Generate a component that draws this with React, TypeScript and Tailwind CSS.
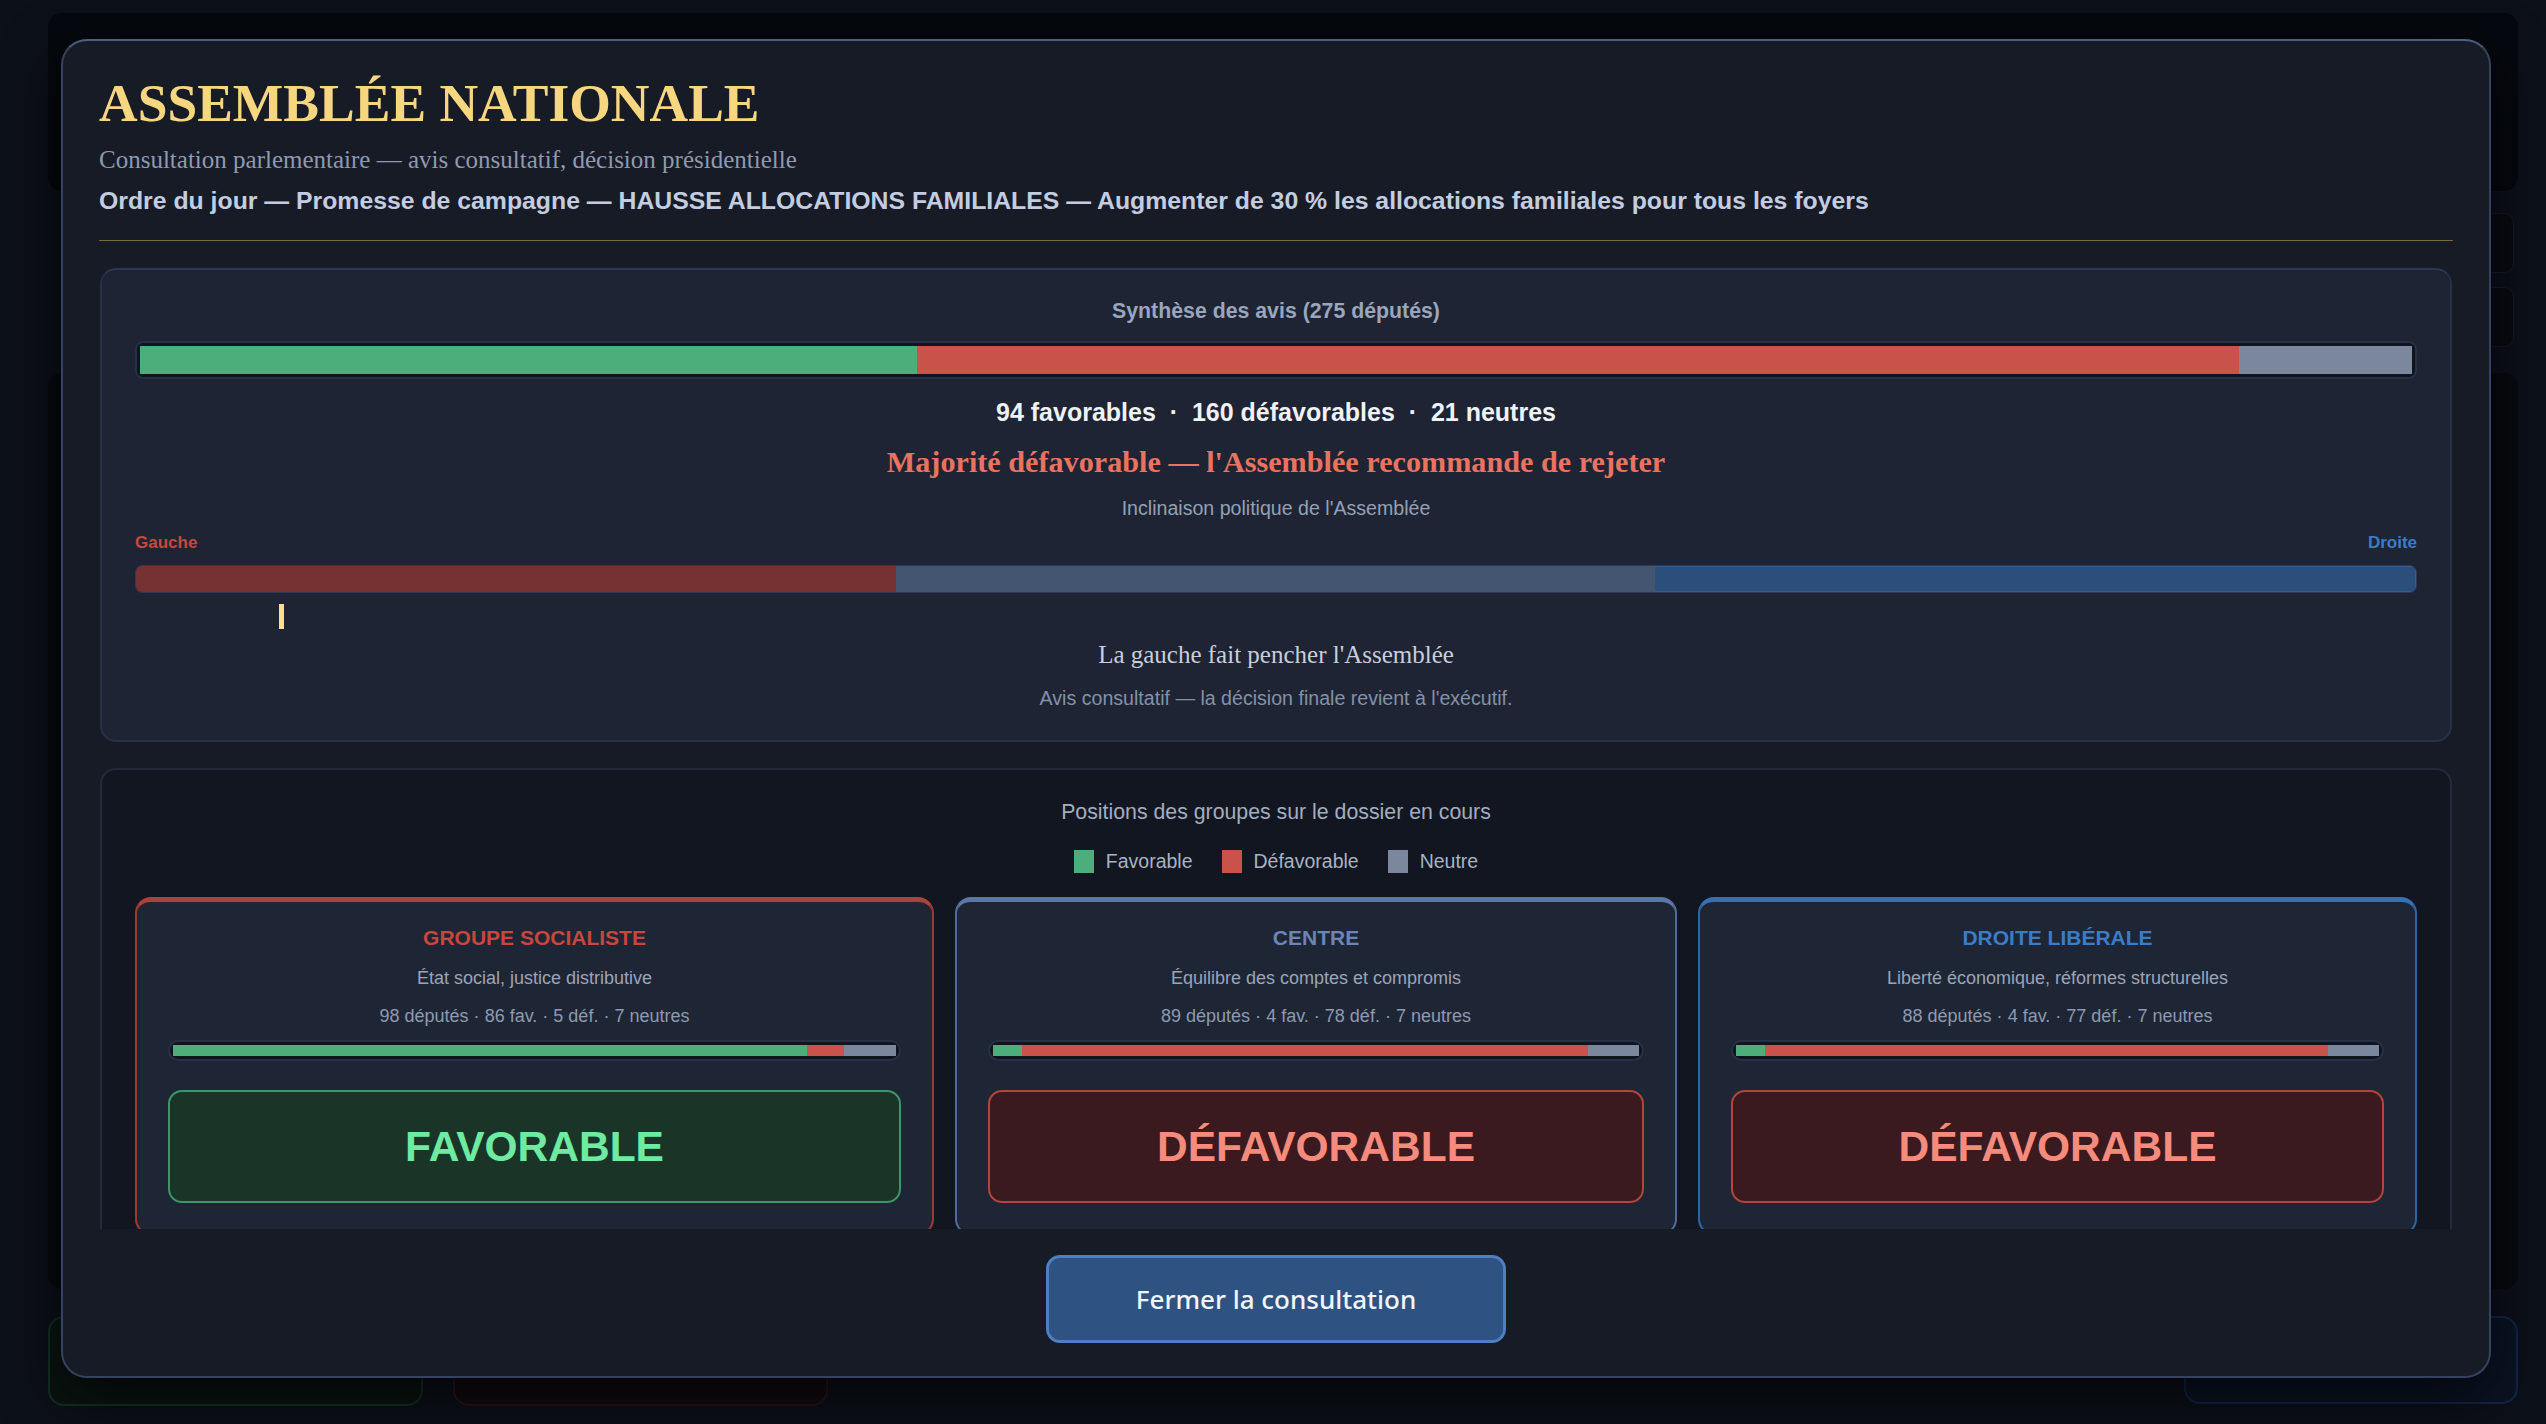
import React from "react";

const sans = { fontFamily: '"Liberation Sans", Arial, sans-serif' };
const serif = { fontFamily: '"Liberation Serif", "Times New Roman", serif' };

interface Group {
  name: string;
  motto: string;
  seats: number;
  fav: number;
  def: number;
  neu: number;
  verdict: "FAVORABLE" | "DÉFAVORABLE";
  cardClass: string;
  titleClass: string;
}

const groups: Group[] = [
  {
    name: "GROUPE SOCIALISTE",
    motto: "État social, justice distributive",
    seats: 98,
    fav: 86,
    def: 5,
    neu: 7,
    verdict: "FAVORABLE",
    cardClass: "border-[#9b3a33] border-t-[#a9443b]",
    titleClass: "text-[#c9463d]",
  },
  {
    name: "CENTRE",
    motto: "Équilibre des comptes et compromis",
    seats: 89,
    fav: 4,
    def: 78,
    neu: 7,
    verdict: "DÉFAVORABLE",
    cardClass: "border-[#4f6d9c] border-t-[#5a77a6]",
    titleClass: "text-[#6a85b6]",
  },
  {
    name: "DROITE LIBÉRALE",
    motto: "Liberté économique, réformes structurelles",
    seats: 88,
    fav: 4,
    def: 77,
    neu: 7,
    verdict: "DÉFAVORABLE",
    cardClass: "border-[#2e66a5] border-t-[#3470b3]",
    titleClass: "text-[#3b7cc6]",
  },
];

const VoteBar = ({ fav, def, neu, thin }: { fav: number; def: number; neu: number; thin?: boolean }) => {
  const total = fav + def + neu;
  return (
    <div className={`border-2 border-[#263046] bg-[#10141f] p-[3px] ${thin ? "rounded-full" : "rounded-[8px]"}`}>
      <div className={`flex w-full ${thin ? "h-[11px]" : "h-[28px]"}`}>
        <div className="bg-[#4caf7b]" style={{ width: `${(fav / total) * 100}%` }} />
        <div className="bg-[#c9524a]" style={{ width: `${(def / total) * 100}%` }} />
        <div className="bg-[#7b879c]" style={{ width: `${(neu / total) * 100}%` }} />
      </div>
    </div>
  );
};

const GroupCard = ({ g }: { g: Group }) => {
  const favorable = g.verdict === "FAVORABLE";
  return (
    <div className={`rounded-[16px] border-2 border-t-[5px] bg-[#1e2535] px-[31px] pt-[22px] pb-[30px] text-center ${g.cardClass}`}>
      <div className={`text-[21px] font-bold leading-[28px] ${g.titleClass}`}>{g.name}</div>
      <div className="mt-[12px] text-[18px] leading-[28px] text-[#9aa5b8]">{g.motto}</div>
      <div className="mt-[10px] text-[18px] leading-[28px] text-[#8e9ab0]">
        {g.seats} députés · {g.fav} fav. · {g.def} déf. · {g.neu} neutres
      </div>
      <div className="mt-[10px]">
        <VoteBar fav={g.fav} def={g.def} neu={g.neu} thin />
      </div>
      <div
        className={`mt-[29px] flex h-[113px] items-center justify-center rounded-[14px] border-2 text-[42.5px] font-bold ${
          favorable ? "border-[#3b9668] bg-[#1a3528] text-[#6eeaa2]" : "border-[#b2463c] bg-[#3a1a1e] text-[#f58b7c]"
        }`}
      >
        {g.verdict}
      </div>
    </div>
  );
};

export default function App() {
  const leaning = 6.3;
  return (
    <div className="relative h-[1424px] w-full overflow-hidden bg-[#0c1019]" style={sans}>
      {/* page derrière la fenêtre */}
      <div className="flex h-full flex-col px-[48px] pt-[13px] pb-[18px]">
        <div className="h-[178px] w-[2470px] rounded-[14px] bg-[#05080e]" />
        <div className="mt-[22px] flex w-[2470px] justify-end gap-[14px] pr-[4px]">
          <div className="h-[60px] w-[120px] rounded-[10px] border border-[#151b27] bg-[#080b12]" />
        </div>
        <div className="mt-[14px] flex w-[2470px] justify-end pr-[4px]">
          <div className="h-[60px] w-[120px] rounded-[10px] border border-[#151b27] bg-[#080b12]" />
        </div>
        <div className="mt-[26px] h-[918px] w-[2470px] rounded-[14px] bg-[#070a10]" />
        <div className="mt-[27px] flex w-[2470px] items-start">
          <div className="h-[90px] w-[375px] rounded-[16px] border-2 border-[#143124] bg-[#0a1410]" />
          <div className="ml-[30px] h-[90px] w-[375px] rounded-[16px] border-2 border-[#2a141a] bg-[#110b10]" />
          <div className="flex-1" />
          <div className="h-[88px] w-[334px] rounded-[16px] border-2 border-[#13264a] bg-[#0b1424]" />
        </div>
      </div>

      {/* fenêtre de consultation */}
      <div className="absolute inset-0 flex items-start pl-[61px] pt-[39px]">
        <div className="flex h-[1339px] w-[2430px] flex-col rounded-[26px] border-2 border-[#34435f] border-t-[#4b6087] bg-[#171b26] shadow-[0_20px_60px_rgba(0,0,0,0.7)]">
          {/* en-tête */}
          <div className="px-[36px] pt-[33px]">
            <h1 className="text-[53.5px] font-bold leading-[58px] text-[#f6d67f]" style={serif}>
              ASSEMBLÉE NATIONALE
            </h1>
            <p className="mt-[11px] text-[25px] leading-[34px] text-[#8e9ab0]" style={serif}>
              Consultation parlementaire — avis consultatif, décision présidentielle
            </p>
            <p className="mt-[7px] text-[24.8px] font-bold leading-[34px] text-[#c3cde0]">
              Ordre du jour — Promesse de campagne — HAUSSE ALLOCATIONS FAMILIALES — Augmenter de 30 % les allocations
              familiales pour tous les foyers
            </p>
            <div className="mt-[22px] h-px bg-[#7a683d]" />
          </div>

          {/* contenu défilant */}
          <div className="flex-1 overflow-hidden px-[37px] pt-[27px]">
            {/* synthèse */}
            <div className="rounded-[16px] border-2 border-[#263047] border-t-[#2c3853] bg-[#1e2433] px-[33px] pt-[26px] pb-[28px] text-center">
              <div className="text-[21.3px] font-bold leading-[30px] text-[#9aa6bd]">Synthèse des avis (275 députés)</div>
              <div className="mt-[15px]">
                <VoteBar fav={94} def={160} neu={21} />
              </div>
              <div className="mt-[15px] text-[25px] font-bold leading-[36px] text-[#eef2f7]">
                94 favorables&nbsp; ·&nbsp; 160 défavorables&nbsp; ·&nbsp; 21 neutres
              </div>
              <div className="mt-[12px] text-[30.2px] font-bold leading-[40px] text-[#e9735f]" style={serif}>
                Majorité défavorable — l'Assemblée recommande de rejeter
              </div>
              <div className="mt-[12px] text-[19.6px] leading-[28px] text-[#94a0b5]">Inclinaison politique de l'Assemblée</div>
              <div className="mt-[9px] flex justify-between text-[17px] font-bold leading-[24px]">
                <span className="text-[#c9473d]">Gauche</span>
                <span className="text-[#3b7dc6]">Droite</span>
              </div>
              <div className="mt-[10px] flex h-[28px] overflow-hidden rounded-[7px] border border-[#2c3a55]">
                <div className="flex-1 bg-[#763233]" />
                <div className="flex-1 bg-[#445572]" />
                <div className="flex-1 border-y border-r border-[#2f5e99] bg-[#2b4e7b]" />
              </div>
              <div className="mt-[11px] h-[25px]">
                <div className="h-[25px] w-[5px] bg-[#f8e08e]" style={{ marginLeft: `${leaning}%` }} />
              </div>
              <div className="mt-[9px] text-[25px] leading-[34px] text-[#c7cfdc]" style={serif}>
                La gauche fait pencher l'Assemblée
              </div>
              <div className="mt-[12px] text-[19.6px] leading-[28px] text-[#8391a8]">
                Avis consultatif — la décision finale revient à l'exécutif.
              </div>
            </div>

            {/* positions des groupes */}
            <div className="mt-[26px] rounded-[16px] border-2 border-[#232b3b] bg-[#121620] px-[33px] pt-[27px] pb-[30px]">
              <div className="text-center text-[21.3px] leading-[30px] text-[#a3adbf]">Positions des groupes sur le dossier en cours</div>
              <div className="mt-[19px] flex items-center justify-center gap-[29px] text-[19.5px] leading-[30px] text-[#a8b3c4]">
                <div className="flex items-center gap-[12px]">
                  <span className="h-[23px] w-[20px] bg-[#4caf7b]" />
                  Favorable
                </div>
                <div className="flex items-center gap-[12px]">
                  <span className="h-[23px] w-[20px] bg-[#c9524a]" />
                  Défavorable
                </div>
                <div className="flex items-center gap-[12px]">
                  <span className="h-[23px] w-[20px] bg-[#7b879c]" />
                  Neutre
                </div>
              </div>
              <div className="mt-[21px] grid grid-cols-[799fr_722fr_719fr] gap-[21px]">
                {groups.map(g => (
                  <GroupCard key={g.name} g={g} />
                ))}
              </div>
            </div>
          </div>

          {/* pied */}
          <div className="flex h-[147px] justify-center pt-[26px]">
            <button
              className="h-[88px] w-[460px] rounded-[14px] border-[3px] border-[#4d7fc2] bg-[#2e5282] text-[26px] font-medium text-[#f1f5f9]"
              style={{ fontFamily: '"Noto Sans", "Open Sans", sans-serif' }}
            >
              Fermer la consultation
            </button>
          </div>
        </div>
      </div>
    </div>
  );
}
